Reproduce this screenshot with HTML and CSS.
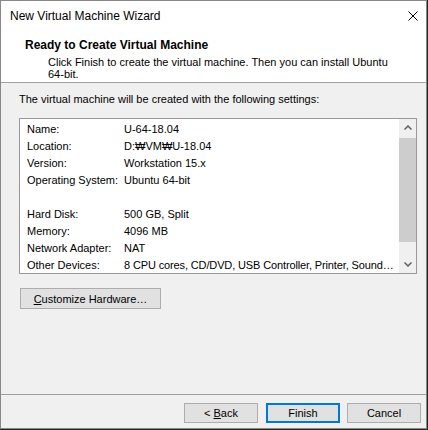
FILE: index.html
```html
<!DOCTYPE html>
<html lang="en">

<head>
    <meta charset="UTF-8">
    <title>New Virtual Machine Wizard</title>
    <link rel="stylesheet" href="styles.css">
</head>

<body>

    <div class="window">
        <!-- Title bar -->
        <div class="titlebar">
            <span class="title">New Virtual Machine Wizard</span>
            <svg class="close" width="10" height="10" viewBox="0 0 10 10">
                <path d="M0.5 0.5 L9.5 9.5 M9.5 0.5 L0.5 9.5" stroke="#000" stroke-width="1" fill="none" />
            </svg>
        </div>

        <!-- Wizard page header -->
        <div class="header">
            <div class="header-title">Ready to Create Virtual Machine</div>
            <div class="header-sub">Click Finish to create the virtual machine. Then you can install Ubuntu 64-bit.</div>
        </div>

        <!-- Summary -->
        <div class="content">
            <p class="intro">The virtual machine will be created with the following settings:</p>

            <div class="listbox">
                <div class="rows">
                    <div class="row"><span class="label">Name:</span><span>U-64-18.04</span></div>
                    <div class="row"><span class="label">Location:</span><span>D:₩VM₩U-18.04</span></div>
                    <div class="row"><span class="label">Version:</span><span>Workstation 15.x</span></div>
                    <div class="row"><span class="label">Operating System:</span><span>Ubuntu 64-bit</span></div>
                    <div class="row"></div>
                    <div class="row"><span class="label">Hard Disk:</span><span>500 GB, Split</span></div>
                    <div class="row"><span class="label">Memory:</span><span>4096 MB</span></div>
                    <div class="row"><span class="label">Network Adapter:</span><span>NAT</span></div>
                    <div class="row"><span class="label">Other Devices:</span><span class="long">8 CPU cores, CD/DVD, USB Controller, Printer, Sound…</span></div>
                </div>
                <div class="scrollbar">
                    <div class="arrow">
                        <svg width="8" height="5" viewBox="0 0 8 5"><path d="M0.5 4.5 L4 1 L7.5 4.5" stroke="#606060" stroke-width="1.5" fill="none" /></svg>
                    </div>
                    <div class="track"><div class="thumb"></div></div>
                    <div class="arrow">
                        <svg width="8" height="5" viewBox="0 0 8 5"><path d="M0.5 0.5 L4 4 L7.5 0.5" stroke="#606060" stroke-width="1.5" fill="none" /></svg>
                    </div>
                </div>
            </div>

            <button class="btn customize"><u>C</u>ustomize Hardware…</button>
        </div>

        <!-- Wizard buttons -->
        <div class="footer">
            <button class="btn back">&lt; <u>B</u>ack</button>
            <button class="btn default">Finish</button>
            <button class="btn">Cancel</button>
        </div>
    </div>

</body>

</html>
```
FILE: styles.css
```css
/* Desktop behind the dialog */
body {
    margin: 0;
    background: #1f2a24;
    font-family: 'Liberation Sans', Arial, sans-serif;
    font-size: 11px;
    color: #000;
}

/* Dialog frame */
.window {
    width: 427px;
    height: 429px;
    box-sizing: border-box;
    border: 1px solid #888;
    background: #f0f0f0;
    display: flex;
    flex-direction: column;
}

/* Title bar */
.titlebar {
    height: 30px;
    background: #fff;
    display: flex;
    align-items: center;
    padding-left: 9px;
}

.title {
    font-size: 12px;
    line-height: 30px;
}

.close {
    margin-left: auto;
    margin-right: 8px;
}

/* Page header */
.header {
    height: 52px;
    box-sizing: border-box;
    background: #fff;
    border-bottom: 1px solid #a0a0a0;
    padding: 7px 0 0 24px;
}

.header-title {
    font-size: 12px;
    font-weight: bold;
    line-height: 14px;
}

.header-sub {
    margin: 4px 0 0 23px;
    max-width: 350px;
    line-height: 12px;
}

/* Body */
.content {
    flex: 1;
    padding: 10px 9px 0 18px;
}

.intro {
    margin: 0;
    line-height: 12px;
}

/* Settings list */
.listbox {
    margin-top: 13px;
    height: 156px;
    box-sizing: border-box;
    border: 1px solid #999;
    background: #fff;
    display: flex;
}

.rows {
    flex: 1;
    overflow: hidden;
    padding: 2px 0 0 7px;
}

.row {
    display: flex;
    height: 17px;
    line-height: 17px;
    white-space: nowrap;
}

.label {
    width: 97px;
    flex-shrink: 0;
}

.long {
    letter-spacing: -0.13px;
}

.scrollbar {
    width: 17px;
    background: #f0f0f0;
    display: flex;
    flex-direction: column;
}

.arrow {
    height: 17px;
    display: flex;
    align-items: center;
    justify-content: center;
}

.track {
    flex: 1;
    padding-top: 2px;
}

.thumb {
    height: 104px;
    background: #cdcdcd;
}

/* Buttons */
.btn {
    display: block;
    box-sizing: border-box;
    width: 74px;
    height: 20px;
    padding: 0;
    border: 1px solid #adadad;
    background: #e1e1e1;
    font-family: 'Liberation Sans', Arial, sans-serif;
    font-size: 11px;
    color: #000;
}

.btn.customize {
    width: 141px;
    height: 21px;
    margin: 14px 0 0 1px;
}

.btn.default {
    border: 2px solid #0078d7;
}

/* Wizard footer */
.footer {
    border-top: 1px solid #a0a0a0;
    padding: 8px 5px 5px 0;
    display: flex;
    justify-content: flex-end;
    gap: 7px;
}

.btn.back {
    margin-right: 1px;
}
```
